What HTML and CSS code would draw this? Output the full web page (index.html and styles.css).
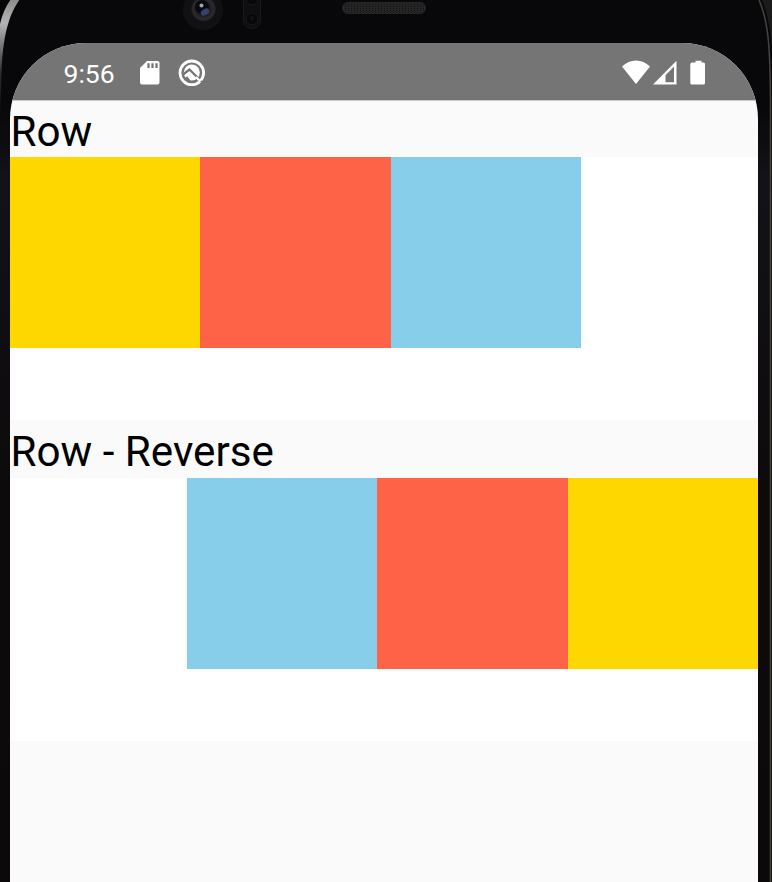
FILE: index.html
```html
<!DOCTYPE html>
<html lang="en">
<head>
<meta charset="utf-8">
<title>Flex direction</title>
<link rel="stylesheet" href="styles.css">
</head>
<body>
<div class="phone">
  <svg class="bezel" width="772" height="882" viewBox="0 0 772 882" aria-hidden="true">
    <defs>
      <linearGradient id="edge" gradientUnits="userSpaceOnUse" x1="0" y1="0" x2="0" y2="115">
        <stop offset="0" stop-color="#8c8c8c"/>
        <stop offset=".2" stop-color="#b4b4b4"/>
        <stop offset=".4" stop-color="#777"/>
        <stop offset=".65" stop-color="#2a2a2d"/>
        <stop offset="1" stop-color="#121218"/>
      </linearGradient>
      <linearGradient id="side" x1="0" y1="0" x2="0" y2="1">
        <stop offset="0" stop-color="#08080b"/>
        <stop offset=".12" stop-color="#08080a"/>
        <stop offset=".2" stop-color="#121218"/>
        <stop offset=".55" stop-color="#0d0a0b"/>
        <stop offset="1" stop-color="#0b0909"/>
      </linearGradient>
      <radialGradient id="lens">
        <stop offset="0" stop-color="#252938"/>
        <stop offset=".5" stop-color="#1c1c20"/>
        <stop offset=".85" stop-color="#2c2c2e"/>
        <stop offset="1" stop-color="#171719"/>
      </radialGradient>
      <pattern id="mesh" width="3" height="2" patternUnits="userSpaceOnUse">
        <rect width="3" height="2" fill="#252525"/>
        <rect width="1" height="1" fill="#121212"/>
      </pattern>
    </defs>
    <rect width="772" height="882" fill="url(#side)"/>
    <path d="M0 0H10Q0 15 0 32Z" fill="#050505"/>
    <path d="M11 -1H20C9 14 2.500 36 1.500 75L0 115V24Q3 10 11 -1Z" fill="url(#edge)"/>
    <path d="M759 0C768 20 770.500 45 770.500 110V882" fill="none" stroke="#45443f" stroke-width="1.500"/>
    <path d="M762 0H772V50C770 25 767 12 762 0Z" fill="#1b1b1b"/>
    <circle cx="203" cy="10" r="20" fill="#111113"/>
    <circle cx="203.500" cy="9" r="12.500" fill="url(#lens)"/>
    <circle cx="202" cy="7" r="7" fill="#0a0b12"/>
    <ellipse cx="205" cy="12" rx="4.500" ry="3" transform="rotate(-30 205 12)" fill="#36426a"/>
    <circle cx="201.500" cy="5.500" r="2" fill="#a5a5a5"/>
    <rect x="243.500" y="-10" width="17" height="38.500" rx="8.500" fill="#0e0e10" stroke="#19191b"/>
    <circle cx="252" cy="-1" r="6" fill="#080809" stroke="#19191b"/>
    <circle cx="252" cy="19" r="6" fill="#080809" stroke="#19191b"/>
    <circle cx="252" cy="18" r="2" fill="#131315"/>
    <rect x="342.500" y="2.500" width="83" height="11" rx="5.500" fill="url(#mesh)" stroke="#252525"/>
  </svg>
  <main class="screen">
    <header class="status">
      <span class="time">9:56</span>
      <svg class="card" width="20" height="24" viewBox="0 0 20 24"><path d="M7 0H17.500Q19.500 0 19.500 2V21.500Q19.500 23.500 17.500 23.500H2Q0 23.500 0 21.500V7Z" fill="#fff"/><path d="M8.500 2.300V7M12.500 2.300V7M16.500 2.300V7" stroke="#757575" stroke-width="2.300"/></svg>
      <svg class="debug" width="28" height="28" viewBox="0 0 28 28" fill="none"><circle cx="13.800" cy="13.800" r="11.800" stroke="#fff" stroke-width="2.800"/><path d="M19.500 21L26 23.500" stroke="#757575" stroke-width="1.600"/><circle cx="13.800" cy="13.500" r="8" fill="#fff"/><path d="M5 15.500L11.500 10.500L20 19" stroke="#757575" stroke-width="2.300"/><path d="M6.500 20.500L9 17L13 22.300Z" fill="#757575"/><path d="M18 18L22.500 22.500" stroke="#fff" stroke-width="2.200"/></svg>
      <svg class="signals" width="84" height="26" viewBox="0 0 84 26"><path d="M0 6.500C8 -1.500 20 -1.500 28 6.500L14 24Z" fill="#fff"/><path fill-rule="evenodd" d="M31 24.500L54.500 .8V24.500ZM43.500 15.300V22.300H52V6.500Z" fill="#fff"/><path d="M73.500 .8H79.500V2.500H81.500Q83 2.500 83 4V23Q83 24.600 81.500 24.600H70Q68.300 24.600 68.300 23V4Q68.300 2.500 70 2.500H73.500Z" fill="#fff"/></svg>
    </header>
    <h2 class="label">Row</h2>
    <section class="row">
      <div class="box gold"></div>
      <div class="box tomato"></div>
      <div class="box sky"></div>
    </section>
    <h2 class="label second">Row - Reverse</h2>
    <section class="row reverse">
      <div class="box gold"></div>
      <div class="box tomato"></div>
      <div class="box sky"></div>
    </section>
  </main>
</div>
</body>
</html>
```
FILE: styles.css
```css
body {
  margin: 0;
  background: #0a090b;
  font-family: Roboto, sans-serif;
}

.phone {
  position: relative;
  box-sizing: border-box;
  width: 772px;
  height: 882px;
  padding: 43px 14px 0 10px;
  overflow: hidden;
}

.bezel {
  position: absolute;
  top: 0;
  left: 0;
}

.screen {
  position: relative;
  height: 839px;
  overflow: hidden;
  border-radius: 76px 76px 0 0;
  background: #fafafa;
}

.status {
  display: flex;
  align-items: center;
  box-sizing: border-box;
  height: 57px;
  padding: 3px 52px 0 53.5px;
  background: #757575;
  color: #fff;
}

.time {
  width: 76px;
  padding-top: 1px;
  font-size: 26.5px;
  line-height: 32px;
}

.card {
  margin-right: 18px;
}

.signals {
  margin-left: auto;
}

.label {
  box-sizing: border-box;
  height: 57px;
  margin: 0;
  padding: 6px 0 0 0.5px;
  border-top: 1px solid #c8c8c8;
  font-size: 42.2px;
  font-weight: 400;
  line-height: 49px;
  color: #000;
}

.second {
  height: 58px;
  padding-top: 7px;
  border-top: 0;
}

.row {
  display: flex;
  align-items: flex-start;
  height: 263px;
  background: #fff;
}

.reverse {
  flex-direction: row-reverse;
}

.box {
  width: 190.4px;
  height: 190.6px;
}

.gold {
  background: #ffd700;
}

.tomato {
  background: #ff6347;
}

.sky {
  background: #87ceeb;
}
```
